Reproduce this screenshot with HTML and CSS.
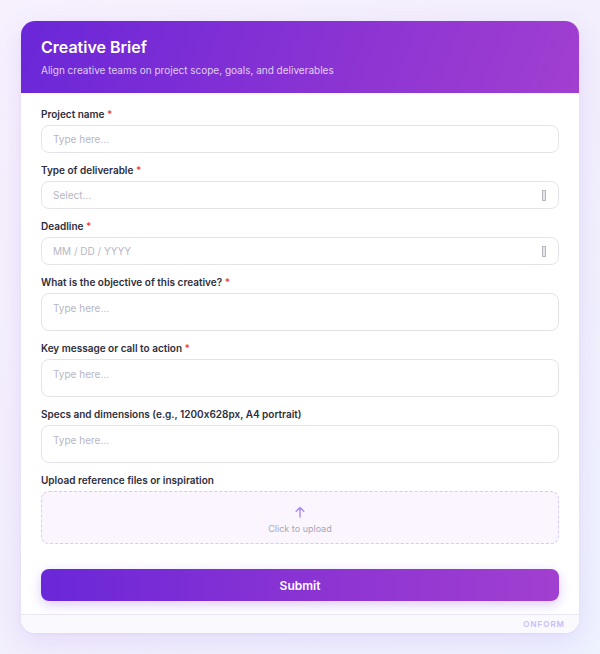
FILE: index.html
```html
<!DOCTYPE html>
<html>
<head>
<meta charset="utf-8">
<link rel="stylesheet" href="styles.css">
</head>
<body>
<div class="card">
  <div class="header">
    <h1 class="title">Creative Brief</h1>
    <p class="subtitle">Align creative teams on project scope, goals, and deliverables</p>
  </div>
  <div class="body">
    <div class="field">
      <div class="label">Project name <span class="req">*</span></div>
      <div class="input"><span class="ph">Type here...</span></div>
    </div>
    <div class="field">
      <div class="label">Type of deliverable <span class="req">*</span></div>
      <div class="input"><span class="ph">Select...</span><span class="tofu"></span></div>
    </div>
    <div class="field">
      <div class="label">Deadline <span class="req">*</span></div>
      <div class="input"><span class="ph">MM / DD / YYYY</span><span class="tofu"></span></div>
    </div>
    <div class="field">
      <div class="label">What is the objective of this creative? <span class="req">*</span></div>
      <div class="input area"><span class="ph">Type here...</span></div>
    </div>
    <div class="field">
      <div class="label">Key message or call to action <span class="req">*</span></div>
      <div class="input area"><span class="ph">Type here...</span></div>
    </div>
    <div class="field">
      <div class="label">Specs and dimensions (e.g., 1200x628px, A4 portrait)</div>
      <div class="input area"><span class="ph">Type here...</span></div>
    </div>
    <div class="field">
      <div class="label">Upload reference files or inspiration</div>
      <div class="upload">
        <svg class="up-icon" width="12" height="12" viewBox="0 0 12 12"><path d="M6 11V1.5M2.2 5.2L6 1.4l3.8 3.8" fill="none" stroke="#a78bfa" stroke-width="1.4" stroke-linecap="round" stroke-linejoin="round"/></svg>
        <span class="up-text">Click to upload</span>
      </div>
    </div>
    <button class="submit">Submit</button>
  </div>
  <div class="footer">ONFORM</div>
</div>
</body>
</html>
```
FILE: styles.css
```css
* { box-sizing: border-box; }
html, body { margin: 0; padding: 0; }
body {
  width: 600px;
  height: 654px;
  background: linear-gradient(135deg, #f7f1fd 0%, #f3effc 50%, #eef2fe 100%);
  font-family: Inter, "Noto Sans", sans-serif;
  font-feature-settings: "calt" 0;
  padding: 21px 21px 0 21px;
  overflow: hidden;
}
.card {
  width: 558px;
  background: #fff;
  border-radius: 14px;
  overflow: hidden;
  box-shadow: 0 8px 28px rgba(124, 58, 237, 0.12), 0 1px 3px rgba(124, 58, 237, 0.06);
}
.header {
  height: 72px;
  padding: 16px 20px 0 20px;
  background: linear-gradient(110deg, #6a27d8 0%, #8a33d3 55%, #a13fd0 100%);
}
.title {
  margin: 0;
  font-size: 16px;
  line-height: 20px;
  font-weight: 600;
  color: #fff;
}
.subtitle {
  margin: 6px 0 0 0;
  font-size: 10px;
  line-height: 14px;
  color: rgba(255,255,255,0.78);
}
.body {
  padding: 14px 20px 13px 20px;
  display: flex;
  flex-direction: column;
}
.field {
  display: flex;
  flex-direction: column;
  gap: 4px;
  margin-bottom: 10px;
}
.label {
  font-size: 10px;
  line-height: 14px;
  font-weight: 600;
  color: #2e2e3c;
}
.req { color: #ef4444; }
.input {
  height: 28px;
  border: 1.5px solid #e4e3ea;
  border-radius: 8px;
  padding: 0 11px;
  display: flex;
  align-items: center;
  justify-content: space-between;
}
.input.area {
  height: 38px;
  align-items: flex-start;
  padding-top: 7px;
}
.ph {
  font-size: 10px;
  line-height: 14px;
  color: #b7b6c4;
}
.tofu {
  width: 4px;
  height: 11px;
  border: 1px solid #b8b8c0;
  background: #e6e6ea;
  margin-right: 1px;
}
.upload {
  height: 53px;
  border: 1.2px dashed #d8c8fb;
  border-radius: 8px;
  background: #faf5ff;
  display: flex;
  flex-direction: column;
  align-items: center;
  justify-content: center;
  gap: 5px;
  padding-top: 6px;
}
.up-icon { display: block; }
.up-text {
  font-size: 9px;
  line-height: 12px;
  color: #a9a6b8;
}
.submit {
  margin-top: 15px;
  height: 32px;
  border: 0;
  border-radius: 8px;
  background: linear-gradient(90deg, #6a27d8 0%, #8a33d3 50%, #a13fd0 100%);
  color: #fff;
  font-family: Inter, "Noto Sans", sans-serif;
  font-size: 12px;
  font-weight: 600;
  box-shadow: 0 4px 12px rgba(124, 58, 237, 0.25);
}
.footer {
  height: 19px;
  border-top: 1px solid #ebe8f2;
  background: #faf9fe;
  text-align: right;
  padding-right: 14px;
  font-size: 8px;
  line-height: 18px;
  letter-spacing: 1px;
  font-weight: 600;
  color: #c7bdf7;
}
```
